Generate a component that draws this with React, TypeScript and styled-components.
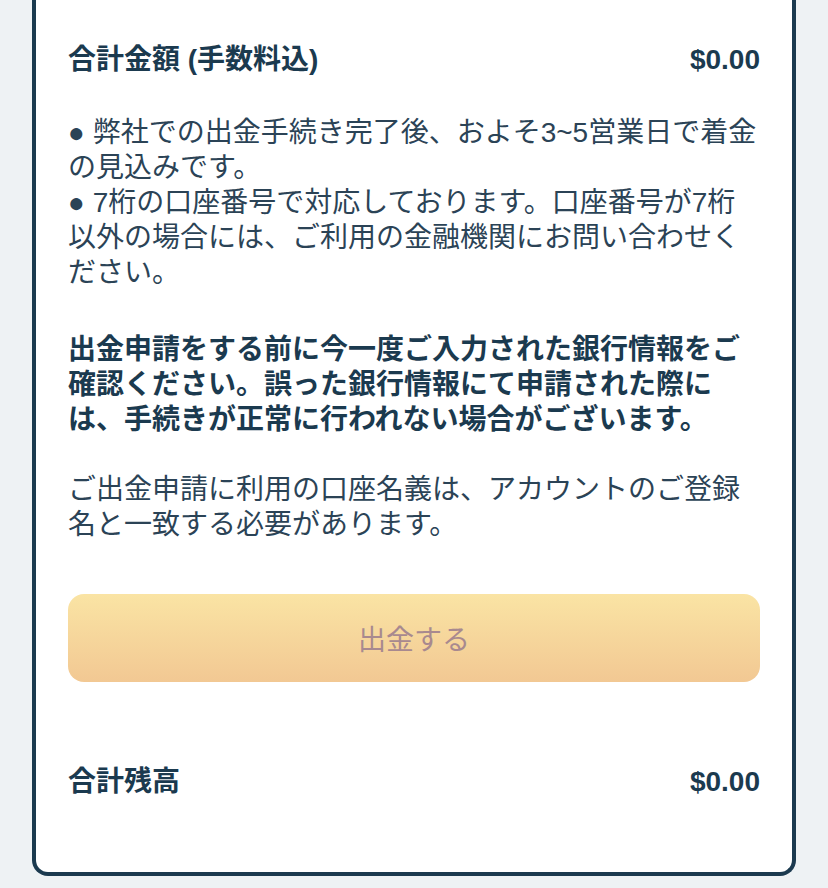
import React from "react";
import styled, { createGlobalStyle } from "styled-components";

const GlobalStyle = createGlobalStyle`
  html, body {
    margin: 0;
    padding: 0;
    background: #eef2f4;
  }
  body {
    font-family: "Liberation Sans", "Noto Sans CJK JP", sans-serif;
    color: #1b3a4f;
  }
`;

const Page = styled.div`
  padding: 0 32px 11px 32px;
`;

const Card = styled.div`
  background: #ffffff;
  border: 4px solid #1b3a4f;
  border-top: none;
  border-radius: 0 0 16px 16px;
  padding: 42px 32px 73px 32px;
  display: flex;
  flex-direction: column;
`;

const SumRow = styled.div<{ $top?: number }>`
  display: flex;
  justify-content: space-between;
  align-items: center;
  margin-top: ${(p) => p.$top ?? 0}px;
  font-size: 28px;
  line-height: 35px;
  font-weight: 700;
  color: #1b3a4f;
`;

const Amount = styled.span`
  font-family: "Liberation Sans", sans-serif;
  font-weight: 700;
`;

const Note = styled.p<{ $top: number; $bold?: boolean }>`
  margin: ${(p) => p.$top}px 0 0 0;
  font-size: 28px;
  line-height: 35px;
  font-weight: ${(p) => (p.$bold ? 700 : 400)};
  color: ${(p) => (p.$bold ? "#1b3a4f" : "#2b4356")};
`;

const SubmitButton = styled.button`
  margin-top: 52px;
  height: 88px;
  width: 100%;
  border: none;
  border-radius: 16px;
  background: linear-gradient(180deg, #fae4a4 0%, #f2c893 100%);
  color: #a8898f;
  font-family: "Liberation Sans", "Noto Sans CJK JP", sans-serif;
  font-size: 28px;
  font-weight: 400;
  cursor: not-allowed;
`;

export default function App() {
  return (
    <>
      <GlobalStyle />
      <Page>
        <Card>
          <SumRow>
            <span>合計金額 (手数料込)</span>
            <Amount>$0.00</Amount>
          </SumRow>
          <Note $top={38}>
            ● 弊社での出金手続き完了後、およそ3~5営業日で着金の見込みです。
            <br />
            ● 7桁の口座番号で対応しております。口座番号が7桁以外の場合には、ご利用の金融機関にお問い合わせください。
          </Note>
          <Note $top={42} $bold>
            出金申請をする前に今一度ご入力された銀行情報をご確認ください。誤った銀行情報にて申請された際には、手続きが正常に行われない場合がございます。
          </Note>
          <Note $top={35}>
            ご出金申請に利用の口座名義は、アカウントのご登録名と一致する必要があります。
          </Note>
          <SubmitButton disabled>出金する</SubmitButton>
          <SumRow $top={82}>
            <span>合計残高</span>
            <Amount>$0.00</Amount>
          </SumRow>
        </Card>
      </Page>
    </>
  );
}
